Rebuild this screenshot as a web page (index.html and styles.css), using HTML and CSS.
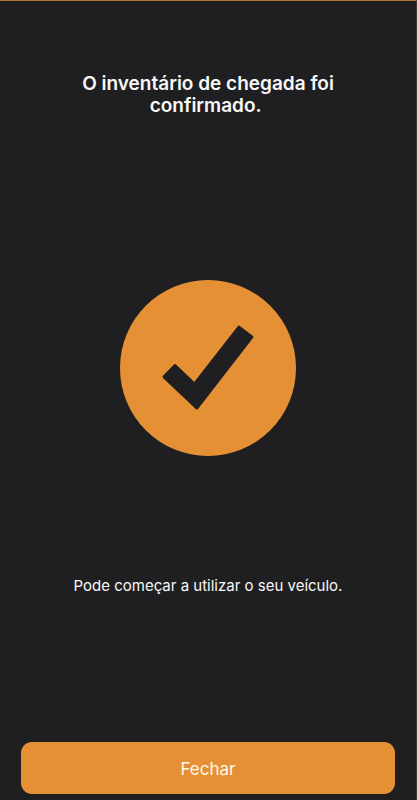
FILE: index.html
```html
<!DOCTYPE html>
<html lang="pt">
<head>
<meta charset="utf-8">
<meta name="viewport" content="width=device-width, initial-scale=1">
<title>Inventário confirmado</title>
<link rel="stylesheet" href="styles.css">
</head>
<body>
<main class="screen">
  <h1 class="title">O inventário de chegada foi confirmado.&nbsp;</h1>
  <div class="status">
    <svg class="badge" viewBox="0 0 176 176" aria-hidden="true">
      <circle class="badge-disc" cx="88" cy="88" r="88"/>
      <path class="badge-check" d="M118.9 47.2 131.8 57 76.8 128 44 96.8 55 85.6 74.4 104.2Z"/>
    </svg>
  </div>
  <p class="message">Pode começar a utilizar o seu veículo.</p>
  <button class="close" type="button">Fechar</button>
</main>
</body>
</html>
```
FILE: styles.css
```css
* {
  box-sizing: border-box;
}

body {
  margin: 0;
  background: #1f1f21;
  color: #f8f8f8;
  font-family: Inter, "Liberation Sans", sans-serif;
}

.screen {
  display: flex;
  flex-direction: column;
  min-height: 100vh;
  padding: 72px 21px 6px;
  border-top: 1px solid #a87438;
  border-right: 1px solid #39393b;
}

.title {
  max-width: 272px;
  margin: 0 auto;
  font-size: 19px;
  font-weight: 600;
  line-height: 22px;
  text-align: center;
}

.status {
  display: flex;
  flex: 1;
  align-items: center;
  justify-content: center;
  padding-top: 42px;
}

.badge {
  width: 176px;
  height: 176px;
}

.badge-disc {
  fill: #e59034;
}

.badge-check {
  fill: #1f1f21;
  stroke: #1f1f21;
  stroke-width: 3;
  stroke-linejoin: round;
}

.message {
  margin: 0 0 146px;
  font-size: 15px;
  line-height: 20px;
  text-align: center;
}

.close {
  width: 100%;
  padding: 15px 0 13px;
  border: 0;
  border-radius: 11px;
  background: #e59034;
  color: #fff8e8;
  font: inherit;
  font-size: 17px;
  line-height: 24px;
  cursor: pointer;
}
```
